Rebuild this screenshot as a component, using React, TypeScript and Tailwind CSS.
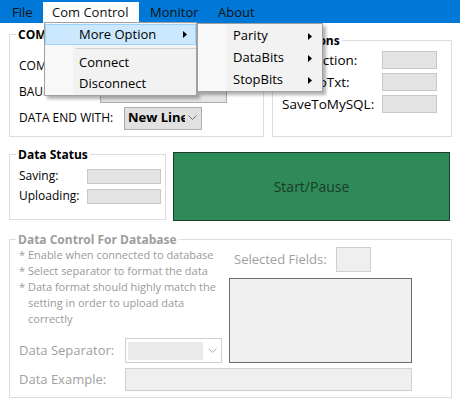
import React from 'react';

const font = { fontFamily: '"Open Sans", "Noto Sans", sans-serif' };

function Chevron({ color = '#606060' }: { color?: string }) {
    return (
        <svg width="9" height="6" viewBox="0 0 9 6" fill="none">
            <polyline points="0.5,0.5 4.5,4.5 8.5,0.5" stroke={color} strokeWidth="1" />
        </svg>
    );
}

function SubArrow() {
    return (
        <svg width="4" height="7" viewBox="0 0 4 7">
            <polygon points="0,0 4,3.5 0,7" fill="#000" />
        </svg>
    );
}

function GroupBox({ title, className, titleClass, children }: { title: string, className: string, titleClass?: string, children?: React.ReactNode }) {
    return (
        <div className={`relative border border-[#dcdcdc] ${className}`}>
            {/* titulo encima del borde */}
            <span className={`absolute left-[6px] top-0 -translate-y-1/2 bg-white px-[2px] leading-none text-[12px] font-bold ${titleClass ?? 'text-black'}`}>
                {title}
            </span>
            {children}
        </div>
    );
}

export default function App() {
    return (
        <div style={font} className="relative w-[460px] h-[406px] bg-white overflow-hidden text-[12px] text-black select-none">
            {/* Barra de menu */}
            <div className="flex h-[23px] bg-[#0078d7] pl-[3px] text-[13px] font-medium text-[#111]">
                <div className="w-[40px] pl-[9px] pt-[2px] flex items-center">File</div>
                <div className="w-[96px] pl-[9px] mt-[2px] h-[21px] bg-white flex items-center">Com Control</div>
                <div className="w-[70px] pl-[11px] pt-[2px] flex items-center">Monitor</div>
                <div className="pl-[9px] pt-[2px] flex items-center">About</div>
            </div>

            <div className="flex flex-col pl-[9px]">
                {/* Fila 1 */}
                <div className="flex items-start gap-[8px]">
                    <GroupBox title="COM" className="mt-[11px] w-[255px] h-[103px] pt-[18px] pl-[9px]">
                        <div className="flex items-center h-[26px]">
                            <span className="w-[81px]">COM PORT:</span>
                            <div className="w-[127px] h-[22px] bg-[#e5e5e5] border border-[#adadad]"></div>
                        </div>
                        <div className="flex items-center h-[26px]">
                            <span className="w-[81px]">BAUD RATE:</span>
                            <div className="w-[127px] h-[22px] bg-[#e5e5e5] border border-[#adadad]"></div>
                        </div>
                        <div className="flex items-center h-[26px]">
                            <span className="w-[105px]">DATA END WITH:</span>
                            <div className="w-[78px] h-[23px] bg-[#e1e1e1] border border-[#adadad] flex items-center pl-[3px] pr-[4px] overflow-hidden">
                                <span className="font-bold text-[13px] whitespace-nowrap overflow-hidden w-[57px]">New Line</span>
                                <span className="ml-auto"><Chevron color="#707070" /></span>
                            </div>
                        </div>
                    </GroupBox>
                    <GroupBox title="Functions" className="mt-[17px] w-[180px] h-[97px] pt-[8px] pl-[9px]">
                        <div className="text-[13.5px]">
                            <div className="flex items-center h-[22px]">
                                <span className="w-[100px]">Connection:</span>
                                <div className="w-[55px] h-[18px] bg-[#e3e3e3] border border-[#c8c8c8]"></div>
                            </div>
                            <div className="flex items-center h-[22px]">
                                <span className="w-[100px]">SaveToTxt:</span>
                                <div className="w-[55px] h-[18px] bg-[#e3e3e3] border border-[#c8c8c8]"></div>
                            </div>
                            <div className="flex items-center h-[22px]">
                                <span className="w-[100px]">SaveToMySQL:</span>
                                <div className="w-[55px] h-[18px] bg-[#e3e3e3] border border-[#c8c8c8]"></div>
                            </div>
                        </div>
                    </GroupBox>
                </div>

                {/* Fila 2 */}
                <div className="flex items-start gap-[7px]">
                    <GroupBox title="Data Status" className="mt-[17px] w-[157px] h-[66px] pt-[11px] pl-[9px]">
                        <div className="flex items-center h-[20px]">
                            <span className="w-[68px]">Saving:</span>
                            <div className="w-[74px] h-[15px] bg-[#e3e3e3] border border-[#c8c8c8]"></div>
                        </div>
                        <div className="flex items-center h-[20px]">
                            <span className="w-[68px]">Uploading:</span>
                            <div className="w-[74px] h-[15px] bg-[#e3e3e3] border border-[#c8c8c8]"></div>
                        </div>
                    </GroupBox>
                    <button className="mt-[15px] w-[277px] h-[69px] bg-[#2e8b57] border border-[#1c3d2a] text-[14px] text-[#1b3b29]">
                        Start/Pause
                    </button>
                </div>

                {/* Fila 3 */}
                <GroupBox title="Data Control For Database" titleClass="text-[#9d9d9d]" className="mt-[18px] w-[443px] h-[159px] pt-[7px] pl-[9px] text-[#a0a0a0]">
                    <div className="flex">
                        <div className="w-[210px] h-[116px] flex flex-col">
                            <div className="text-[11px] leading-[16px] text-[#9a9a9a]">
                                <div>* Enable when connected to database</div>
                                <div>* Select separator to format the data</div>
                                <div>* Data format should highly match the</div>
                                <div className="pl-[9px]">setting in order to upload data</div>
                                <div className="pl-[9px]">correctly</div>
                            </div>
                            <div className="mt-auto flex items-center h-[25px] text-[13px]">
                                <span className="w-[106px]">Data Separator:</span>
                                <div className="w-[97px] h-[25px] border border-[#cfcfcf] flex items-center pl-[2px] pr-[4px]">
                                    <div className="w-[75px] h-[18px] bg-[#eaeaea]"></div>
                                    <span className="ml-auto"><Chevron color="#b0b0b0" /></span>
                                </div>
                            </div>
                        </div>
                        <div className="flex flex-col">
                            <div className="flex items-center h-[25px] pl-[5px] text-[13px]">
                                <span className="w-[102px]">Selected Fields:</span>
                                <div className="w-[35px] h-[25px] bg-[#efefef] border border-[#cfcfcf]"></div>
                            </div>
                            <div className="mt-[6px] w-[183px] h-[85px] bg-[#efefef] border border-[#6d6d6d]"></div>
                        </div>
                    </div>
                    <div className="mt-[5px] flex items-center h-[23px] text-[13px]">
                        <span className="w-[106px]">Data Example:</span>
                        <div className="w-[287px] h-[23px] bg-[#efefef] border border-[#cfcfcf]"></div>
                    </div>
                </GroupBox>
            </div>

            {/* Menu desplegable */}
            <div className="absolute left-[44px] top-[22px] w-[153px] h-[74px] bg-[#f2f2f2] border border-[#a0a0a0] shadow-[3px_3px_3px_rgba(0,0,0,0.3)] pt-[1px] text-[13px] font-medium">
                <div className="absolute left-0 top-0 bottom-0 w-[28px] bg-[#f8f8f8]"></div>
                <div className="relative h-[21px] bg-[#cce8ff] border border-[#99d1ff] flex items-center pl-[33px] pr-[8px]">
                    <span>More Option</span>
                    <span className="ml-auto"><SubArrow /></span>
                </div>
                <div className="relative h-[7px] flex items-center pl-[31px]">
                    <div className="w-full h-px bg-[#d0d0d0]"></div>
                </div>
                <div className="relative h-[21px] flex items-center pl-[34px]">Connect</div>
                <div className="relative h-[21px] flex items-center pl-[34px]">Disconnect</div>
            </div>

            {/* Submenu */}
            <div className="absolute left-[197px] top-[23px] w-[126px] h-[69px] bg-[#f2f2f2] border border-[#a0a0a0] shadow-[3px_3px_3px_rgba(0,0,0,0.3)] pt-[1px] text-[13px] font-medium">
                <div className="absolute left-0 top-0 bottom-0 w-[28px] bg-[#f8f8f8]"></div>
                {['Parity', 'DataBits', 'StopBits'].map((t) => (
                    <div key={t} className="relative h-[22px] flex items-center pl-[35px] pr-[10px]">
                        <span>{t}</span>
                        <span className="ml-auto"><SubArrow /></span>
                    </div>
                ))}
            </div>
        </div>
    );
}
